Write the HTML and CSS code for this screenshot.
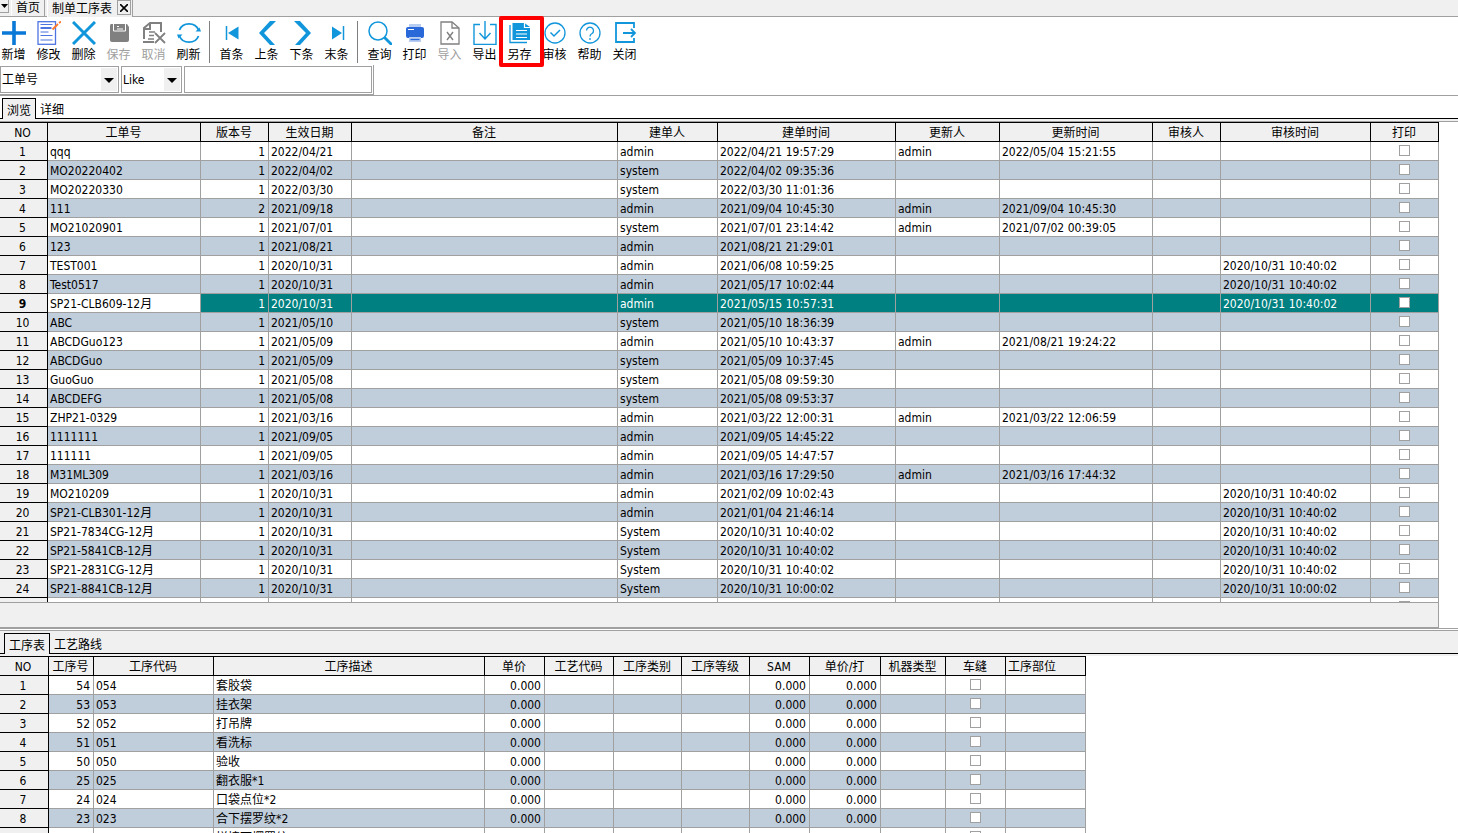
FILE: index.html
```html
<!DOCTYPE html>
<html lang="zh-CN">
<head>
    <meta charset="UTF-8">
    <meta name="viewport" content="width=device-width, initial-scale=1.0">
    <title>制单工序表</title>
    <link rel="stylesheet" href="styles.css">
</head>
<body>
    <div class="app">
        <nav class="window-tabs">
            <button class="tab-list" aria-label="窗口列表"><svg width="7" height="4" viewBox="0 0 7 4"><path d="M0 0h7L3.5 4z"/></svg></button>
            <button class="window-tab">首页</button>
            <div class="window-tab active">
                <button class="window-title">制单工序表</button>
                <button class="window-close" aria-label="关闭窗口"><svg width="8" height="8" viewBox="0 0 8 8"><path d="M0 0l8 8M8 0L0 8" stroke="#000" stroke-width="1.6"/></svg></button>
            </div>
        </nav>

        <div class="toolbar">
            <button class="tool"><svg viewBox="0 0 24 24"><path d="M12 0v24M0 12h24" stroke="#0a78d6" stroke-width="3.6"/></svg>新增</button>
            <button class="tool"><svg viewBox="0 0 24 24" fill="none" stroke="#4d74e0"><rect x="1" y=".7" width="17.5" height="22.6" stroke-width="1.3"/><path d="M3.5 3.5h12M3.5 11h8M3.5 14.5h12M3.5 19h12"/><path d="M3.5 7h11" stroke-width="2"/><path d="M15.5 8.500L21 3M22 2l2-1.500" stroke="#ff7a2e" stroke-width="1.8"/></svg>修改</button>
            <button class="tool"><svg viewBox="0 0 24 24"><path d="M1 1l22 22M23 1L1 23" stroke="#1296db" stroke-width="3"/></svg>删除</button>
            <button class="tool" disabled><svg viewBox="0 0 24 24"><path d="M4 3h12v0h4l2 3v13q0 2-2 2H5q-2 0-2-2V5q0-2 1-2z" fill="#808080"/><path d="M6.500 3v7h12V3" stroke="#fff" fill="none"/><path d="M10 5.500h2M10 8h6" stroke="#fff"/></svg>保存</button>
            <button class="tool" disabled><svg viewBox="0 0 24 24" fill="none" stroke="#808080"><path d="M2 18V7l6-5h11v9" stroke-width="2"/><path d="M1 21h11M8 2v6H2" stroke-width="2"/><path d="M7 11h6M7 14.500h5M6 18h6" stroke-width="1.5"/><path d="M13 12l10 10M23 12L13 22" stroke-width="1.8"/></svg>取消</button>
            <button class="tool"><svg viewBox="0 0 24 24" fill="none" stroke="#1296db" stroke-width="1.8"><path d="M2.5 9A10 9 0 0 1 21.500 9M21.500 15A10 9 0 0 1 2.500 15"/><path d="M18.5 10.500h5.500l-1.500-4zM5.500 13.500H0l1.500 4z" fill="#1296db" stroke="none"/></svg>刷新</button>
            <span class="divider"></span>
            <button class="tool"><svg viewBox="0 0 24 24"><path d="M6.500 5v14" stroke="#1296db" stroke-width="1.5"/><path d="M18.500 5.500v13L8 12z" fill="#1296db"/></svg>首条</button>
            <button class="tool"><svg viewBox="0 0 24 24"><path d="M4 12L15 0h6L9 12l11 12h-5z" fill="#1296db"/></svg>上条</button>
            <button class="tool"><svg viewBox="0 0 24 24"><path d="M21 12L10 0H4l12 12L5 24h5z" fill="#1296db"/></svg>下条</button>
            <button class="tool"><svg viewBox="0 0 24 24"><path d="M18.500 5v14" stroke="#1296db" stroke-width="1.5"/><path d="M7 5.500v13L17 12z" fill="#1296db"/></svg>末条</button>
            <span class="divider"></span>
            <button class="tool"><svg viewBox="0 0 24 24" fill="none" stroke="#1296db"><circle cx="10" cy="10" r="9" stroke-width="1.5"/><path d="M16.500 16.500L24 24" stroke-width="2.8"/></svg>查询</button>
            <button class="tool"><svg viewBox="0 0 24 24"><path d="M6 3h12v4H6z" fill="#b8cdf2"/><rect x="3" y="6" width="18" height="11" rx="2" fill="#2868d8"/><path d="M5 8.500h6" stroke="#fff"/><path d="M6 16h12v5H6z" fill="#b8cdf2"/><path d="M7.500 18.500h9" stroke="#2868d8" stroke-width="1.3"/></svg>打印</button>
            <button class="tool" disabled><svg viewBox="0 0 24 24" fill="none" stroke="#808080"><path d="M3 1h11l7 6v16H3z" stroke-width="1.3"/><path d="M14 1v6h7" stroke-width="1.3"/><path d="M9 11l6 8M15 11l-6 8" stroke-width="1.4"/></svg>导入</button>
            <button class="tool"><svg viewBox="0 0 24 24" fill="none" stroke="#1296db" stroke-width="1.4"><path d="M7 3.500H1v20h22v-20h-6M12 0v17M6.500 12l5.500 6 5.500-6"/></svg>导出</button>
            <button class="tool marked"><svg viewBox="0 0 24 24"><path d="M4.500 2h12L22 6v13H4.500z" fill="#1296db"/><path d="M2 4v17.500h17" stroke="#1296db" stroke-width="1.3" fill="none"/><path d="M16.500 2v4.500h5.500M8 9.500h11M8 13h11M8 16.500h11" stroke="#fff" stroke-width="1.2" fill="none"/></svg>另存</button>
            <button class="tool"><svg viewBox="0 0 24 24" fill="none" stroke="#1296db"><circle cx="12" cy="12" r="10" stroke-width="1.3"/><path d="M7.500 11.500l3.500 3.500 6-6" stroke-width="1.5"/></svg>审核</button>
            <button class="tool"><svg viewBox="0 0 24 24" fill="none" stroke="#1296db" stroke-width="1.3"><circle cx="12" cy="12" r="10"/><path d="M8.500 9.500a3.500 3.500 0 1 1 5.500 3q-2 1-2 3M12 17v2"/></svg>帮助</button>
            <button class="tool"><svg viewBox="0 0 24 24" fill="none" stroke="#1296db" stroke-width="1.8"><path d="M21 7V2H3v19h18v-4"/><path d="M10 12h12M18 8l4 4-4 4"/></svg>关闭</button>
        </div>

        <div class="filter-row">
            <form class="filter">
                <span class="combo combo-field"><select aria-label="查询字段"><option>工单号</option></select></span>
                <span class="combo combo-op"><select aria-label="条件"><option>Like</option></select></span>
                <input class="keyword" type="text" aria-label="查询内容">
            </form>
        </div>

        <div class="tabs main-tabs">
            <button class="tab active">浏览</button>
            <button class="tab">详细</button>
        </div>

        <div class="pane order-pane">
            <table class="grid" id="orders">
                <colgroup></colgroup>
                <thead></thead>
                <tbody></tbody>
            </table>
        </div>
        <div class="grid-footer"><div class="summary"></div></div>

        <div class="tabs sub-tabs">
            <button class="tab active">工序表</button>
            <button class="tab">工艺路线</button>
        </div>

        <div class="pane process-pane">
            <table class="grid" id="processes">
                <colgroup></colgroup>
                <thead></thead>
                <tbody></tbody>
            </table>
        </div>
    </div>
    <script src="script.js"></script>
</body>
</html>
```
FILE: styles.css
```css
*, *::before, *::after {
    box-sizing: border-box;
}
body {
    margin: 0;
    font-family: "DejaVu Sans Condensed", "Noto Sans CJK SC", sans-serif;
    font-size: 12px;
    color: #000;
    background-color: #fff;
}
button, select, input {
    font: inherit;
    color: inherit;
    margin: 0;
    padding: 0;
    border: none;
    border-radius: 0;
    background: none;
}
.app {
    display: flex;
    flex-direction: column;
    height: 100vh;
    overflow: hidden;
}

/* window tabs */
.window-tabs {
    display: flex;
    flex: none;
    height: 17px;
    background-color: #f0f0f0;
    border-bottom: 1px solid #a0a0a0;
    line-height: 16px;
}
.tab-list {
    display: flex;
    justify-content: center;
    width: 9px;
    height: 13px;
    margin-right: 2px;
    padding-top: 4px;
    border: 1px solid #a0a0a0;
    border-width: 0 1px 1px 0;
}
.tab-list svg {
    flex: none;
}
.window-tab {
    display: flex;
    padding: 0 4px;
    border-left: 1px solid #fff;
    border-right: 1px solid #a0a0a0;
}
.window-tab.active {
    gap: 5px;
    height: 17px;
    margin-left: 2px;
    padding-right: 1px;
    background-color: #f0f0f0;
}
.window-close {
    display: flex;
    align-items: center;
    justify-content: center;
    width: 14px;
    height: 15px;
    border: 1px solid #a0a0a0;
}

/* toolbar */
.toolbar {
    display: flex;
    flex: none;
    gap: 10px;
    padding: 4px 1px 2px;
}
.tool {
    display: flex;
    flex-direction: column;
    align-items: center;
    flex: none;
    width: 25px;
    line-height: 16px;
    white-space: nowrap;
}
.tool svg {
    width: 24px;
    height: 24px;
    margin-bottom: 2px;
}
.tool:disabled {
    color: #a0a0a0;
}
.divider {
    width: 1px;
    margin: 0 -1px 0 -2px;
    background-color: #808080;
}
.tool.marked {
    position: relative;
}
.tool.marked::after {
    content: "";
    position: absolute;
    top: -5px;
    left: -8px;
    width: 45px;
    height: 51px;
    border: 4px solid #f00;
    border-radius: 2px;
    z-index: 1;
}

/* filter */
.filter-row {
    display: flex;
    flex: none;
    border-bottom: 1px solid #a0a0a0;
}
.filter {
    display: flex;
    padding: 1px 1px 1px 0;
    border-right: 1px solid #a0a0a0;
    border-bottom: 1px solid #a0a0a0;
}
.combo {
    position: relative;
    margin-right: 2px;
}
.combo select {
    appearance: none;
    width: 100%;
    height: 27px;
    padding-left: 1px;
    border: 1px solid #a0a0a0;
    background: linear-gradient(#f0f0f0, #f0f0f0) no-repeat right 1px center / 16px 23px;
}
.combo::after {
    content: "";
    position: absolute;
    top: 12px;
    right: 5px;
    border: 5px solid transparent;
    border-top-color: #000;
    border-bottom: none;
}
.combo-field {
    width: 119px;
}
.combo-op {
    width: 61px;
}
.keyword {
    width: 188px;
    height: 27px;
    padding: 0 2px;
    border: 1px solid #a0a0a0;
}

/* page tabs */
.tabs {
    display: flex;
    flex: none;
    border-bottom: 1px solid #000;
}
.tab {
    height: 20px;
    padding: 4px 4px 0;
    line-height: 16px;
}
.tab.active {
    height: 21px;
    margin-bottom: -1px;
    background-color: #f0f0f0;
    border: 1px solid #000;
    border-bottom: none;
}
.main-tabs {
    padding: 2px 2px 0;
}
.sub-tabs {
    margin-top: 1px;
    padding: 2px 4px 0;
    background-color: #f0f0f0;
    border-top: 1px solid #a0a0a0;
}

/* grids */
.pane {
    overflow: hidden;
    min-height: 0;
    border-top: 2px solid #f0f0f0;
}
.order-pane {
    flex: 481 1 0;
}
.order-pane::before {
    content: "";
    display: block;
    height: 1px;
    background-color: #a0a0a0;
}
.process-pane {
    flex: 177 1 0;
}
.grid {
    table-layout: fixed;
    border-collapse: separate;
    border-spacing: 0;
    width: 0;
}
.grid th, .grid td {
    height: 19px;
    padding: 2px 3px 0 2px;
    line-height: 16px;
    white-space: nowrap;
    overflow: hidden;
    font-weight: normal;
    text-align: left;
    border: 0 solid #a0a0a0;
    border-width: 0 1px 1px 0;
}
.grid thead th {
    height: 20px;
    text-align: center;
    background-color: #f0f0f0;
    border-color: #000;
    border-top-width: 1px;
}
.grid tbody tr:nth-child(even) {
    background-color: #c0cddb;
}
.grid tbody th {
    text-align: center;
    background-color: #f0f0f0;
    border-color: #000;
}
.grid th:first-child {
    padding-right: 4px;
}
.grid .right {
    text-align: right;
}
.grid td.check {
    padding: 0 2px 1px;
}
.grid thead .left {
    text-align: left;
}
.grid tbody tr.selected {
    color: #fff;
    background-color: #008080;
}
.grid tr.selected th {
    color: #000;
    font-weight: bold;
}
.grid tr.selected .focused {
    color: #000;
    background-color: #fff;
}
.grid input {
    appearance: none;
    display: block;
    width: 11px;
    height: 11px;
    margin: 0 auto;
    background-color: #fff;
    border: 1px solid #a0a0a0;
}
.grid-footer {
    flex: none;
    border-bottom: 1px solid #a0a0a0;
}
.summary {
    width: 1439px;
    height: 26px;
    background-color: #f0f0f0;
    border: 1px solid #a0a0a0;
    border-left: none;
}
```
FILE: script.js
```js
const orderColumns = [
    ['NO', 48], ['工单号', 153], ['版本号', 68, 'right'], ['生效日期', 83], ['备注', 266],
    ['建单人', 100], ['建单时间', 178], ['更新人', 104], ['更新时间', 153],
    ['审核人', 68], ['审核时间', 150], ['打印', 68, 'check']
];

const T = '2020/10/31 10:40:02';

// 工单号, 版本号, 生效日期, 建单人, 建单时间, 更新人, 更新时间, 审核时间
const orders = [
    ['qqq', 1, '2022/04/21', 'admin', '2022/04/21 19:57:29', 'admin', '2022/05/04 15:21:55', ''],
    ['MO20220402', 1, '2022/04/02', 'system', '2022/04/02 09:35:36', '', '', ''],
    ['MO20220330', 1, '2022/03/30', 'system', '2022/03/30 11:01:36', '', '', ''],
    ['111', 2, '2021/09/18', 'admin', '2021/09/04 10:45:30', 'admin', '2021/09/04 10:45:30', ''],
    ['MO21020901', 1, '2021/07/01', 'system', '2021/07/01 23:14:42', 'admin', '2021/07/02 00:39:05', ''],
    ['123', 1, '2021/08/21', 'admin', '2021/08/21 21:29:01', '', '', ''],
    ['TEST001', 1, '2020/10/31', 'admin', '2021/06/08 10:59:25', '', '', T],
    ['Test0517', 1, '2020/10/31', 'admin', '2021/05/17 10:02:44', '', '', T],
    ['SP21-CLB609-12月', 1, '2020/10/31', 'admin', '2021/05/15 10:57:31', '', '', T],
    ['ABC', 1, '2021/05/10', 'system', '2021/05/10 18:36:39', '', '', ''],
    ['ABCDGuo123', 1, '2021/05/09', 'admin', '2021/05/10 10:43:37', 'admin', '2021/08/21 19:24:22', ''],
    ['ABCDGuo', 1, '2021/05/09', 'system', '2021/05/09 10:37:45', '', '', ''],
    ['GuoGuo', 1, '2021/05/08', 'system', '2021/05/08 09:59:30', '', '', ''],
    ['ABCDEFG', 1, '2021/05/08', 'system', '2021/05/08 09:53:37', '', '', ''],
    ['ZHP21-0329', 1, '2021/03/16', 'admin', '2021/03/22 12:00:31', 'admin', '2021/03/22 12:06:59', ''],
    ['1111111', 1, '2021/09/05', 'admin', '2021/09/05 14:45:22', '', '', ''],
    ['111111', 1, '2021/09/05', 'admin', '2021/09/05 14:47:57', '', '', ''],
    ['M31ML309', 1, '2021/03/16', 'admin', '2021/03/16 17:29:50', 'admin', '2021/03/16 17:44:32', ''],
    ['MO210209', 1, '2020/10/31', 'admin', '2021/02/09 10:02:43', '', '', T],
    ['SP21-CLB301-12月', 1, '2020/10/31', 'admin', '2021/01/04 21:46:14', '', '', T],
    ['SP21-7834CG-12月', 1, '2020/10/31', 'System', T, '', '', T],
    ['SP21-5841CB-12月', 1, '2020/10/31', 'System', T, '', '', T],
    ['SP21-2831CG-12月', 1, '2020/10/31', 'System', T, '', '', T],
    ['SP21-8841CB-12月', 1, '2020/10/31', 'System', '2020/10/31 10:00:02', '', '', '2020/10/31 10:00:02'],
    ['', '', '', '', '', '', '', '']
];

const processColumns = [
    ['NO', 49], ['工序号', 45, 'right'], ['工序代码', 120], ['工序描述', 271], ['单价', 60, 'right'],
    ['工艺代码', 69], ['工序类别', 68], ['工序等级', 68], ['SAM', 60, 'right'],
    ['单价/打', 71, 'right'], ['机器类型', 65], ['车缝', 60, 'check'], ['工序部位', 80, 'left']
];

const processes = [
    [54, '套胶袋'], [53, '挂衣架'], [52, '打吊牌'], [51, '看洗标'], [50, '验收'],
    [25, '翻衣服*1'], [24, '口袋点位*2'], [23, '合下摆罗纹*2'], [22, '拼接下摆罗纹*2']
];

function buildGrid(id, columns, rows, selected) {
    const table = document.getElementById(id);
    table.querySelector('colgroup').innerHTML =
        columns.map(c => `<col style="width: ${c[1]}px">`).join('');
    table.querySelector('thead').innerHTML =
        '<tr>' + columns.map(c => `<th scope="col" class="${c[2] === 'left' ? 'left' : ''}">${c[0]}</th>`).join('') + '</tr>';
    table.querySelector('tbody').innerHTML = rows.map((row, i) => {
        const cells = columns.slice(1).map((c, j) => {
            if (c[2] === 'check') {
                return `<td class="check"><input type="checkbox" aria-label="${c[0]} ${i + 1}"></td>`;
            }
            const focused = i === selected && j === 0 ? 'focused' : '';
            return `<td class="${c[2] || ''} ${focused}">${row[j]}</td>`;
        });
        // a row without data gets no number
        const no = row[0] === '' ? '' : i + 1;
        return `<tr class="${i === selected ? 'selected' : ''}"><th scope="row">${no}</th>${cells.join('')}</tr>`;
    }).join('');
}

buildGrid('orders', orderColumns,
    orders.map(o => [o[0], o[1], o[2], '', o[3], o[4], o[5], o[6], '', o[7]]), 8);

buildGrid('processes', processColumns,
    processes.map(p => [p[0], '0' + p[0], p[1], '0.000', '', '', '', '0.000', '0.000', '', '', '']));
```
